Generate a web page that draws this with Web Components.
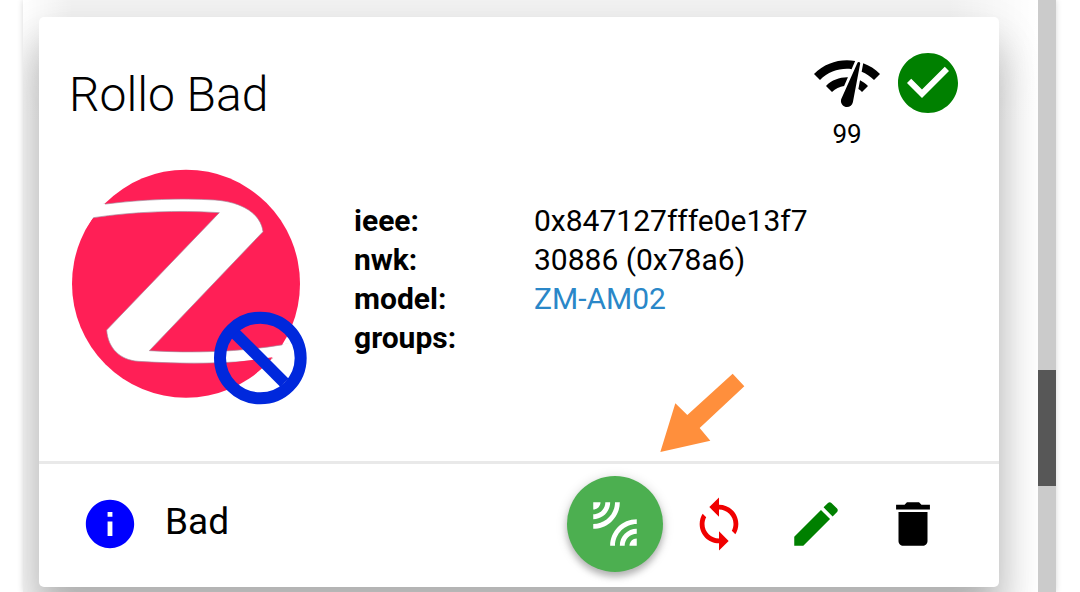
<!DOCTYPE html>
<html lang="en">
<head>
<meta charset="utf-8">
<meta name="viewport" content="width=device-width, initial-scale=1">
<title>Zigbee devices</title>
<style>
  body { margin: 0; background: #fff; color: #000; font-family: Roboto, "Liberation Sans", sans-serif; }
</style>
</head>
<body>
<device-panel>
  <device-card>
    <h2 slot="title">Rollo Bad</h2>
    <link-quality slot="status" value="99"></link-quality>
    <md-icon slot="status" name="check_circle" size="72" color="green"></md-icon>
    <device-logo slot="image"></device-logo>
    <device-facts slot="facts" ieee="0x847127fffe0e13f7" nwk="30886 (0x78a6)" model="ZM-AM02" groups=""></device-facts>
    <icon-button slot="info" icon="info" color="#00f" label="Info" compact></icon-button>
    <span slot="room">Bad</span>
    <icon-button slot="actions" icon="leak_add" color="#fff" label="Pair" raised></icon-button>
    <icon-button slot="actions" icon="sync" color="#f00000" label="Reconfigure"></icon-button>
    <icon-button slot="actions" icon="edit" color="green" label="Edit"></icon-button>
    <icon-button slot="actions" icon="delete" color="#000" label="Delete"></icon-button>
    <pointer-arrow slot="overlay"></pointer-arrow>
  </device-card>
</device-panel>

<script>
const ICONS = {
  network_check: 'M15.9 5c-.17 0-.32.09-.41.23l-.07.15-5.18 11.65c-.16.29-.26.61-.26.96 0 1.11.9 2.01 2.01 2.01.96 0 1.77-.68 1.96-1.59l.01-.03L16.4 5.5c0-.28-.22-.5-.5-.5zM1 9l2 2c2.88-2.88 6.79-4.08 10.53-3.62l1.19-2.68C9.89 3.84 4.74 5.27 1 9zm20 2l2-2c-1.64-1.64-3.55-2.82-5.59-3.57l-.53 2.82c1.5.62 2.9 1.53 4.12 2.75zm-4 4l2-2c-.8-.8-1.7-1.42-2.66-1.89l-.55 2.92c.42.27.83.59 1.21.97zM5 13l2 2c1.13-1.13 2.56-1.79 4.03-2l1.28-2.88c-2.63-.08-5.3.87-7.31 2.88z',
  check_circle: 'M12 2C6.48 2 2 6.48 2 12s4.48 10 10 10 10-4.48 10-10S17.52 2 12 2zm-2 15l-5-5 1.41-1.41L10 14.17l7.59-7.59L19 8l-9 9z',
  info: 'M12 2C6.48 2 2 6.48 2 12s4.48 10 10 10 10-4.48 10-10S17.52 2 12 2zm1 15h-2v-6h2v6zm0-8h-2V7h2v2z',
  leak_add: 'M6 3H3v3c1.66 0 3-1.34 3-3zm8 0h-2c0 4.97-4.03 9-9 9v2c6.08 0 11-4.93 11-11zm-4 0H8c0 2.76-2.24 5-5 5v2c3.87 0 7-3.13 7-7zm0 18h2c0-4.97 4.03-9 9-9v-2c-6.07 0-11 4.93-11 11zm8 0h3v-3c-1.66 0-3 1.34-3 3zm-4 0h2c0-2.76 2.24-5 5-5v-2c-3.87 0-7 3.13-7 7z',
  sync: 'M12 4V1L8 5l4 4V6c3.31 0 6 2.69 6 6 0 1.01-.25 1.97-.7 2.8l1.46 1.46C19.54 15.03 20 13.57 20 12c0-4.42-3.58-8-8-8zm0 14c-3.31 0-6-2.69-6-6 0-1.01.25-1.97.7-2.8L5.24 7.74C4.46 8.97 4 10.43 4 12c0 4.42 3.58 8 8 8v3l4-4-4-4v3z',
  edit: 'M3 17.25V21h3.75L17.81 9.94l-3.75-3.75L3 17.25zM20.71 7.04c.39-.39.39-1.02 0-1.41l-2.34-2.34c-.39-.39-1.02-.39-1.41 0l-1.83 1.83 3.75 3.75 1.83-1.83z',
  delete: 'M6 19c0 1.1.9 2 2 2h8c1.1 0 2-.9 2-2V7H6v12zM19 4h-3.5l-1-1h-5l-1 1H5v2h14V4z'
};

class Base extends HTMLElement {
  connectedCallback() {
    if (!this.shadowRoot) this.attachShadow({ mode: 'open' }).innerHTML = this.render();
  }
  attr(name) { return this.getAttribute(name) || ''; }
}

customElements.define('md-icon', class extends Base {
  render() {
    const size = this.attr('size') || '58';
    return `<style>:host{display:block;width:${size}px;height:${size}px;color:${this.attr('color') || 'inherit'}}
      svg{display:block;width:100%;height:100%;fill:currentColor}</style>
      <svg viewBox="0 0 24 24" aria-hidden="true"><path d="${ICONS[this.attr('name')]}"/></svg>`;
  }
});

customElements.define('icon-button', class extends Base {
  render() {
    return `<style>
      :host{display:block}
      button{display:grid;place-items:center;width:96px;height:96px;padding:0;border:0;border-radius:50%;background:none;cursor:pointer}
      :host([compact]) button{width:58px}
      :host([raised]){margin-right:7px}
      :host([raised]) button{background:#4caf50;box-shadow:0 5px 6px rgba(0,0,0,.2),0 2px 12px rgba(0,0,0,.18)}
      </style>
      <button type="button" aria-label="${this.attr('label')}"><md-icon name="${this.attr('icon')}" color="${this.attr('color')}"></md-icon></button>`;
  }
});

customElements.define('link-quality', class extends Base {
  render() {
    return `<style>:host{display:flex;flex-direction:column;align-items:center}
      span{font-size:26px;line-height:30px}</style>
      <md-icon name="network_check" size="72"></md-icon><span>${this.attr('value')}</span>`;
  }
});

customElements.define('device-logo', class extends Base {
  render() {
    return `<style>:host{display:block;width:240px;height:240px}svg{display:block;width:100%;height:100%}</style>
      <svg viewBox="24 18 720 720" role="img" aria-label="Device image">
        <circle cx="378" cy="371" r="342" fill="#ff1f56"/>
        <path fill="#fff" stroke="#a58a9c" stroke-width="2" d="M138 132C250 118 360 114 465 120C545 126 602 160 609 215L268 572C400 580 540 576 670 554L780 540L780 560L638 596C500 613 360 612 235 604C180 600 144 565 140 510L478 158C350 150 220 155 100 173L70 176L90 136Z"/>
        <path fill="#fff" d="M0 100H60L136 133L100 172L76 206H0ZM669 553L638 596L590 640L640 700H770V530Z"/>
        <path fill="#ff1f56" d="M500 610L638 592C620 612 604 625 590 637L510 680Z"/>
        <circle cx="601" cy="594" r="121" fill="none" stroke="#0028dc" stroke-width="36"/>
        <path d="M525 520L673 668" stroke="#0028dc" stroke-width="35"/>
      </svg>`;
  }
});

customElements.define('device-facts', class extends Base {
  render() {
    const row = (key, value) => `<tr><th scope="row">${key}:</th><td>${value}</td></tr>`;
    return `<style>
      :host{display:block}
      table{border-collapse:collapse;font-size:30px;line-height:39px;text-align:left}
      th,td{padding:0;height:39px;white-space:nowrap}
      th{width:180px;font-weight:700}
      a{color:#2a87c8;text-decoration:none}
      </style>
      <table>${row('ieee', this.attr('ieee'))}${row('nwk', this.attr('nwk'))}${row('model', `<a href="#model">${this.attr('model')}</a>`)}${row('groups', this.attr('groups'))}</table>`;
  }
});

customElements.define('pointer-arrow', class extends Base {
  render() {
    return `<style>:host{display:block}svg{display:block;width:85px;height:80px}</style>
      <svg viewBox="330 38 255 240" aria-hidden="true"><path fill="#ff8f3c" d="M548 40L583 78L449 203L481 241L331 275L376 129L412 164Z"/></svg>`;
  }
});

customElements.define('device-card', class extends Base {
  render() {
    return `<style>
      :host{display:block;position:relative;background:#fff;border-radius:5px;
        box-shadow:0 36px 44px rgba(0,0,0,.2),-3px 22px 44px 4px rgba(0,0,0,.15)}
      header{display:flex;justify-content:space-between;align-items:flex-start;padding:30px 35px 0 30px}
      ::slotted(h2){margin:19px 0 0;font-size:48px;line-height:58px;font-weight:300}
      .status{display:flex;gap:9px}
      .body{display:flex;gap:46px;padding:17px 30px 55px 29px}
      ::slotted(device-facts){margin-top:35px}
      footer{display:flex;align-items:center;border-top:3px solid #e9e9e9;padding:12px 38px 15px 42px}
      ::slotted(span){flex:1;padding-left:26px;padding-bottom:4px;font-size:37px;line-height:44px}
      .actions{display:flex;gap:1px}
      .overlay{position:absolute;right:254px;bottom:134px}
      </style>
      <header><slot name="title"></slot><div class="status"><slot name="status"></slot></div></header>
      <div class="body"><slot name="image"></slot><slot name="facts"></slot></div>
      <footer><slot name="info"></slot><slot name="room"></slot><div class="actions"><slot name="actions"></slot></div></footer>
      <div class="overlay"><slot name="overlay"></slot></div>`;
  }
});

customElements.define('device-panel', class extends Base {
  render() {
    return `<style>
      :host{display:flex;height:100vh;overflow:hidden;padding:0 24px 0 23px;box-sizing:border-box}
      .panel{display:flex;flex:1;box-shadow:0 0 6px rgba(0,0,0,.16)}
      .list{flex:1;padding:17px 39px 0 16px;overflow:hidden;
        background:linear-gradient(90deg,#fff,transparent 50px,transparent calc(100% - 90px),#fff),linear-gradient(#f2f2f2,#f2f2f2 20px,#fff 120px)}
      .track{width:18px;background:#cbcbcb;display:flex;flex-direction:column}
      .track::before{content:"";flex:370}
      .thumb{flex:116;background:#575757}
      .track::after{content:"";flex:106}
      </style>
      <div class="panel"><div class="list"><slot></slot></div><div class="track"><div class="thumb"></div></div></div>`;
  }
});
</script>
</body>
</html>
